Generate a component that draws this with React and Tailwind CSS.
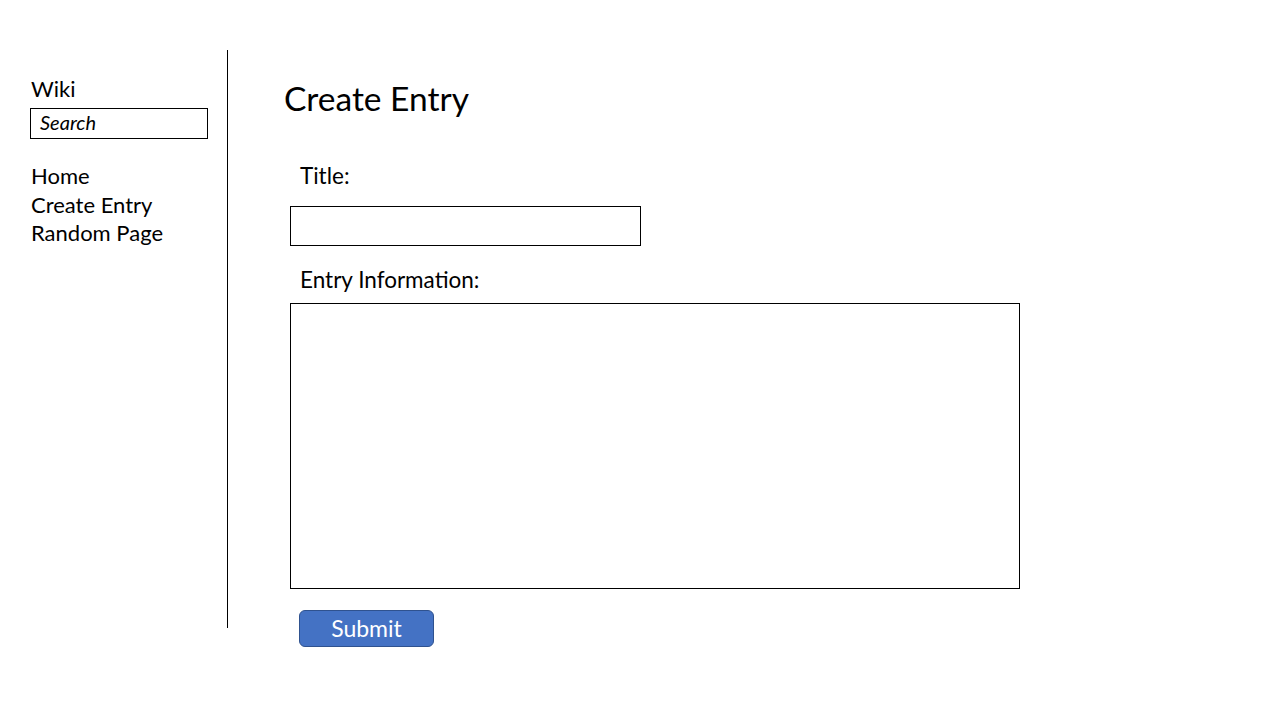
export default function App() {
  const font = { fontFamily: 'Lato, "Open Sans", sans-serif' };
  return (
    <div className="w-[1280px] h-[720px] bg-white flex pt-[50px] text-black" style={font}>
      <aside className="w-[228px] h-[578px] border-r border-black pl-[30px] pt-[25px] flex flex-col">
        <div className="text-[22px] leading-[28px] pl-[1px]">Wiki</div>
        <div className="mt-[5px] w-[178px] h-[31px] border border-black pl-[9px] pb-[3px] flex items-center">
          <span className="italic text-[20px] leading-[24px]">Search</span>
        </div>
        <nav className="mt-[23px] flex flex-col pl-[1px] text-[22px] leading-[28.7px]">
          <span>Home</span>
          <span>Create Entry</span>
          <span>Random Page</span>
        </nav>
      </aside>
      <main className="pl-[56px] pt-[28px] flex flex-col">
        <h1 className="text-[33.5px] leading-[40px]">Create Entry</h1>
        <div className="mt-[44px] pl-[16px] text-[22.5px] leading-[28px]">Title:</div>
        <div className="mt-[16px] ml-[6px] w-[351px] h-[40px] border border-black" />
        <div className="mt-[20px] pl-[16px] text-[22.5px] leading-[28px]">Entry Information:</div>
        <div className="mt-[9px] ml-[6px] w-[730px] h-[286px] border border-black" />
        <button className="mt-[21px] ml-[15px] w-[135px] h-[37px] rounded-[6px] bg-[#4472C4] border border-[#2F528F] text-white text-[23px] leading-[28px] pb-[2px] flex items-center justify-center">
          Submit
        </button>
      </main>
    </div>
  );
}
